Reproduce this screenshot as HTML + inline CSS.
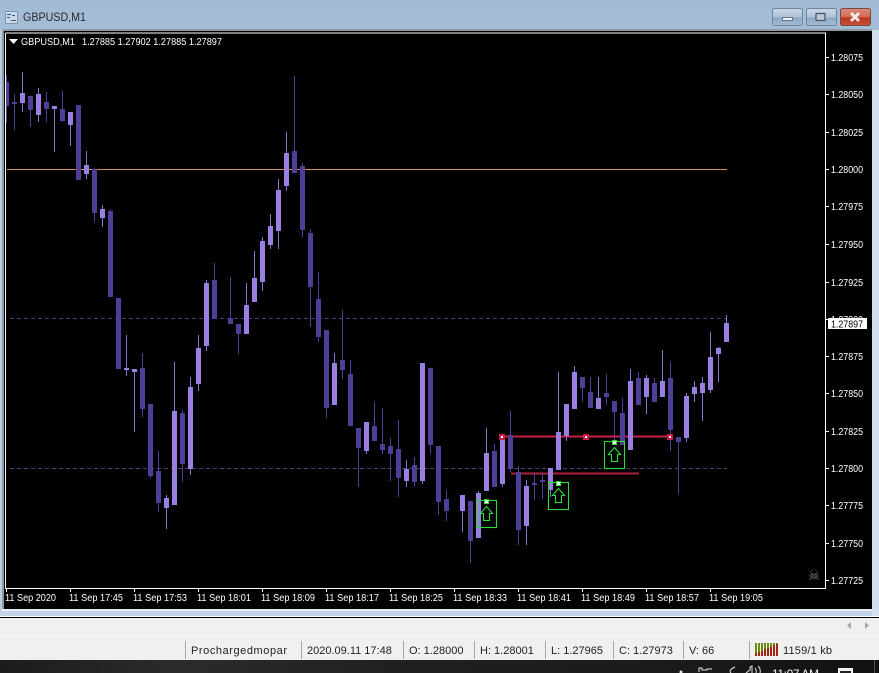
<!DOCTYPE html>
<html><head><meta charset="utf-8"><title>GBPUSD,M1</title>
<style>
html,body{margin:0;padding:0;width:879px;height:673px;overflow:hidden;background:#000}
svg{display:block}
text{font-family:"Liberation Sans",sans-serif}
.w text{font-size:10px;fill:#fff}
.s text{font-size:11px;fill:#222}
</style></head><body>
<svg width="879" height="673" viewBox="0 0 879 673" xmlns="http://www.w3.org/2000/svg">
<defs>
<linearGradient id="tb" x1="0" y1="0" x2="0" y2="1"><stop offset="0" stop-color="#a3bcd6"/><stop offset="1" stop-color="#bccfe1"/></linearGradient>
<linearGradient id="btn" x1="0" y1="0" x2="0" y2="1"><stop offset="0" stop-color="#c6d6e6"/><stop offset=".5" stop-color="#b0c4d8"/><stop offset=".55" stop-color="#8fa9c2"/><stop offset="1" stop-color="#a5bcd2"/></linearGradient>
<linearGradient id="cl" x1="0" y1="0" x2="0" y2="1"><stop offset="0" stop-color="#d98c7c"/><stop offset=".5" stop-color="#cf6a56"/><stop offset=".55" stop-color="#b8361e"/><stop offset="1" stop-color="#c85238"/></linearGradient>
<linearGradient id="tk" x1="0" y1="0" x2="1" y2="0"><stop offset="0" stop-color="#1c1c1c"/><stop offset=".2" stop-color="#2b2b2b"/><stop offset=".45" stop-color="#202020"/><stop offset=".75" stop-color="#1b1b1b"/><stop offset="1" stop-color="#111"/></linearGradient>
<clipPath id="chart"><rect x="6" y="34" width="819" height="554"/></clipPath>
</defs>

<!-- window -->
<rect width="879" height="673" fill="url(#tb)"/>
<rect x="0" y="30" width="879" height="587" fill="#c3d4e8"/>
<rect x="872" y="30" width="7" height="587" fill="#d2e0ee"/>
<rect x="0" y="30" width="3" height="580" fill="#b8cbe0"/>
<rect x="3" y="29" width="869" height="2" fill="#8f9aa6"/>
<rect x="2" y="30" width="2" height="580" fill="#8f9aa6"/>
<rect x="4" y="31" width="868" height="578" fill="#000"/>
<rect x="2" y="609" width="871" height="2" fill="#e4ecf4"/>

<!-- title bar -->
<rect x="5.500" y="11.500" width="12" height="12" fill="#c8d9ea" stroke="#7e98b4"/>
<path d="M7 14.500h4M7 17.500h3M11 20.500h5M12 15.500h3" stroke="#3d5a80" fill="none"/>
<text x="23" y="21" font-size="11.500" fill="#2a2a2a" textLength="63" lengthAdjust="spacingAndGlyphs">GBPUSD,M1</text>
<rect x="772.500" y="8.500" width="30" height="17" rx="2" fill="url(#btn)" stroke="#70869e"/>
<rect x="782.500" y="17.500" width="10" height="3" fill="#eef2f6" stroke="#50606f" stroke-width=".8"/>
<rect x="806.500" y="8.500" width="30" height="17" rx="2" fill="url(#btn)" stroke="#70869e"/>
<rect x="816" y="13.500" width="9" height="7" fill="#b8c8d8" stroke="#44535f" stroke-width="1.200"/>
<rect x="840.500" y="8.500" width="30" height="17" rx="2" fill="url(#cl)" stroke="#7a4a42"/>
<path d="M851 13l8 8M859 13l-8 8" stroke="#f0e8e2" stroke-width="3" fill="none"/>

<!-- chart objects behind candles -->
<g clip-path="url(#chart)" shape-rendering="crispEdges">
<path d="M7 169.500H727" stroke="#d0935f" fill="none"/>
<path d="M10 318.500H727M10 468.500H727" stroke="#4a3f72" stroke-dasharray="4 3" fill="none"/>
<path d="M502 436.500H670" stroke="#c81e48" stroke-width="2" fill="none"/>
<path d="M511 473.500H639" stroke="#b0203f" stroke-width="2" fill="none"/>

<!-- dark wicks -->
<path stroke="#4e3f96" fill="none" d="M6.500 75V123M14.500 94V130M30.500 96V127M46.500 92V122M62.500 91V122M78.500 105V180M94.500 168V222M110.500 209V297M118.500 298V369M142.500 353V417M150.500 404V478M158.500 451V512M182.500 410V482M214.500 263V319M230.500 277V324M238.500 324V354M294.500 76V173M302.500 163V237M310.500 229V327M318.500 272V342M326.500 330V418M342.500 310V379M350.500 360V426M358.500 428V487M374.500 402V441M382.500 408V454M390.500 438V481M398.500 420V497M414.500 457V487M430.500 368V454M438.500 446V515M446.500 490V521M470.500 501V563M494.500 444V487M510.500 411V472M518.500 466V545M534.500 472V500M542.500 474V499M582.500 377V402M590.500 377V408M606.500 374V405M614.500 401V440M622.500 398V445M638.500 372V405M654.500 378V402M670.500 362V451M678.500 437V494"/>
<!-- light wicks -->
<path stroke="#8a6fd0" fill="none" d="M22.500 72V112M38.500 88V122M54.500 106V152M70.500 112V146M86.500 151V179M102.500 205V227M126.500 335V376M134.500 369V432M166.500 495V529M174.500 362V505M190.500 377V475M198.500 335V391M206.500 280V351M246.500 283V334M254.500 251V302M262.500 237V291M270.500 214V249M278.500 179V249M286.500 132V191M334.500 353V405M366.500 422V454M406.500 460V487M422.500 363V484M462.500 495V532M478.500 491V538M486.500 428V491M502.500 437V487M526.500 480V545M550.500 468V497M558.500 372V470M566.500 404V441M574.500 366V409M598.500 377V409M630.500 369V450M646.500 375V414M662.500 350V397M686.500 393V442M694.500 381V402M702.500 377V421M710.500 332V393M718.500 347V382M726.500 315V342"/>
<!-- dark bodies -->
<path stroke="#4e3f96" stroke-width="5" fill="none" d="M14.500 102V104M30.500 96V110M46.500 102V109M62.500 109V121M78.500 105V180M94.500 169V213M110.500 211V297M118.500 298V369M142.500 368V409M150.500 404V476M158.500 471V503M182.500 413V464M214.500 280V319M230.500 318V324M238.500 324V334M294.500 151V173M302.500 166V230M310.500 233V287M318.500 299V337M326.500 330V408M342.500 360V370M350.500 374V426M358.500 428V448M374.500 426V441M382.500 444V450M390.500 446V454M398.500 449V478M414.500 465V482M430.500 368V445M438.500 446V502M446.500 499V511M470.500 501V541M494.500 451V487M510.500 435V469M518.500 472V530M534.500 483V485M542.500 480V482M582.500 377V388M590.500 392V408M606.500 393V397M614.500 401V412M622.500 413V445M638.500 378V405M654.500 383V402M670.500 378V430M678.500 437V442"/>
<path stroke="#4e3f96" stroke-width="3" fill="none" d="M7.500 82V106"/>
<!-- light bodies -->
<path stroke="#9a7ee2" stroke-width="5" fill="none" d="M22.500 93V103M38.500 94V115M54.500 106V109M70.500 112V125M86.500 165V174M102.500 209V218M126.500 368V370M134.500 369V372M166.500 498V508M174.500 411V505M190.500 387V469M198.500 348V384M206.500 283V346M246.500 305V334M254.500 278V302M262.500 241V282M270.500 226V245M278.500 190V231M286.500 153V186M334.500 363V405M366.500 422V451M406.500 469V481M422.500 363V481M462.500 495V511M478.500 493V538M486.500 453V491M502.500 437V484M526.500 486V526M550.500 468V490M558.500 432V470M566.500 404V436M574.500 372V409M598.500 398V409M630.500 381V450M646.500 378V397M662.500 381V397M686.500 396V438M694.500 387V394M702.500 383V393M710.500 357V390M718.500 348V354M726.500 323V342"/>

<!-- red handles -->
<g fill="#c81e48">
<rect x="499" y="434" width="6" height="6"/><rect x="583" y="434" width="6" height="6"/><rect x="667" y="434" width="6" height="6"/>
</g>
<g fill="#fff">
<rect x="501" y="436" width="2" height="2"/><rect x="585" y="436" width="2" height="2"/><rect x="669" y="436" width="2" height="2"/>
</g>
</g>

<!-- green objects -->
<g fill="none" stroke="#2bdc3a" stroke-width="1.100">
<rect x="476.500" y="500.500" width="20" height="27"/>
<path d="M486.500 506.500l6 7h-3v7h-6v-7h-3z"/>
<rect x="548.500" y="482.500" width="20" height="27"/>
<path d="M558.500 488.500l6 7h-3v7h-6v-7h-3z"/>
<rect x="604.500" y="441.500" width="20" height="27"/>
<path d="M614.500 447.500l6 7h-3v7h-6v-7h-3z"/>
</g>
<g shape-rendering="crispEdges">
<rect x="484" y="499" width="5" height="5" fill="#2bdc3a"/><rect x="485" y="500" width="3" height="3" fill="#e8ffe8"/>
<rect x="556" y="481" width="5" height="5" fill="#2bdc3a"/><rect x="557" y="482" width="3" height="3" fill="#e8ffe8"/>
<rect x="612" y="440" width="5" height="5" fill="#2bdc3a"/><rect x="613" y="441" width="3" height="3" fill="#e8ffe8"/>
</g>

<!-- frame -->
<g shape-rendering="crispEdges">
<path d="M5.500 33V588.500H825.500V33H5.500" stroke="#fff" fill="none"/>
<path stroke="#fff" fill="none" d="M826 57.500h3M826 94.500h3M826 132.500h3M826 169.500h3M826 206.500h3M826 244.500h3M826 282.500h3M826 319.500h3M826 356.500h3M826 393.500h3M826 431.500h3M826 468.500h3M826 505.500h3M826 543.500h3M826 580.500h3"/>
<path stroke="#fff" fill="none" d="M6.500 589v3M70.500 589v3M134.500 589v3M198.500 589v3M262.500 589v3M326.500 589v3M390.500 589v3M454.500 589v3M518.500 589v3M582.500 589v3M646.500 589v3M710.500 589v3"/>
</g>
<path d="M9 39h9l-4.500 5z" fill="#fff"/>

<g class="w">
<text x="21" y="45" textLength="54" lengthAdjust="spacingAndGlyphs">GBPUSD,M1</text>
<text x="82" y="45" textLength="140" lengthAdjust="spacingAndGlyphs">1.27885 1.27902 1.27885 1.27897</text>
<text x="831" y="61" textLength="32" lengthAdjust="spacingAndGlyphs">1.28075</text>
<text x="831" y="98" textLength="32" lengthAdjust="spacingAndGlyphs">1.28050</text>
<text x="831" y="136" textLength="32" lengthAdjust="spacingAndGlyphs">1.28025</text>
<text x="831" y="173" textLength="32" lengthAdjust="spacingAndGlyphs">1.28000</text>
<text x="831" y="210" textLength="32" lengthAdjust="spacingAndGlyphs">1.27975</text>
<text x="831" y="248" textLength="32" lengthAdjust="spacingAndGlyphs">1.27950</text>
<text x="831" y="286" textLength="32" lengthAdjust="spacingAndGlyphs">1.27925</text>
<text x="831" y="323" textLength="32" lengthAdjust="spacingAndGlyphs">1.27900</text>
<text x="831" y="360" textLength="32" lengthAdjust="spacingAndGlyphs">1.27875</text>
<text x="831" y="397" textLength="32" lengthAdjust="spacingAndGlyphs">1.27850</text>
<text x="831" y="435" textLength="32" lengthAdjust="spacingAndGlyphs">1.27825</text>
<text x="831" y="472" textLength="32" lengthAdjust="spacingAndGlyphs">1.27800</text>
<text x="831" y="509" textLength="32" lengthAdjust="spacingAndGlyphs">1.27775</text>
<text x="831" y="547" textLength="32" lengthAdjust="spacingAndGlyphs">1.27750</text>
<text x="831" y="584" textLength="32" lengthAdjust="spacingAndGlyphs">1.27725</text>
<text x="5" y="601" textLength="51" lengthAdjust="spacingAndGlyphs">11 Sep 2020</text>
<text x="69" y="601" textLength="54" lengthAdjust="spacingAndGlyphs">11 Sep 17:45</text>
<text x="133" y="601" textLength="54" lengthAdjust="spacingAndGlyphs">11 Sep 17:53</text>
<text x="197" y="601" textLength="54" lengthAdjust="spacingAndGlyphs">11 Sep 18:01</text>
<text x="261" y="601" textLength="54" lengthAdjust="spacingAndGlyphs">11 Sep 18:09</text>
<text x="325" y="601" textLength="54" lengthAdjust="spacingAndGlyphs">11 Sep 18:17</text>
<text x="389" y="601" textLength="54" lengthAdjust="spacingAndGlyphs">11 Sep 18:25</text>
<text x="453" y="601" textLength="54" lengthAdjust="spacingAndGlyphs">11 Sep 18:33</text>
<text x="517" y="601" textLength="54" lengthAdjust="spacingAndGlyphs">11 Sep 18:41</text>
<text x="581" y="601" textLength="54" lengthAdjust="spacingAndGlyphs">11 Sep 18:49</text>
<text x="645" y="601" textLength="54" lengthAdjust="spacingAndGlyphs">11 Sep 18:57</text>
<text x="709" y="601" textLength="54" lengthAdjust="spacingAndGlyphs">11 Sep 19:05</text>
</g>
<rect x="828" y="318" width="39" height="11" fill="#fff"/>
<text x="831" y="327.500" font-size="10" fill="#000" textLength="32" lengthAdjust="spacingAndGlyphs">1.27897</text>
<text x="814" y="580" font-size="14" fill="#7a7a7a" text-anchor="middle" style="font-family:'DejaVu Sans',sans-serif">☠</text>

<!-- bottom bars -->
<rect x="0" y="616" width="879" height="1" fill="#fff"/>
<rect x="0" y="617" width="879" height="1" fill="#000"/>
<rect x="0" y="618" width="879" height="42" fill="#f0f0f0"/>
<rect x="0" y="636" width="879" height="1" fill="#fafafa"/>
<path d="M851 622v7l-4-3.500zM865 622v7l4-3.500z" fill="#a4a8ac"/>
<g shape-rendering="crispEdges" stroke="#a8a8a8" fill="none">
<path d="M185.500 641v18M301.500 641v18M403.500 641v18M474.500 641v18M545.500 641v18M613.500 641v18M683.500 641v18M749.500 641v18"/>
</g>
<g class="s">
<text x="191" y="654" textLength="96">Prochargedmopar</text>
<text x="307" y="654">2020.09.11 17:48</text>
<text x="409" y="654">O: 1.28000</text>
<text x="480" y="654">H: 1.28001</text>
<text x="551" y="654">L: 1.27965</text>
<text x="619" y="654">C: 1.27973</text>
<text x="689" y="654">V: 66</text>
<text x="783" y="654" textLength="49">1159/1 kb</text>
</g>
<g shape-rendering="crispEdges" stroke-width="2" fill="none">
<path stroke="#6c8c12" d="M756 643v10M759 643v9M762 643v8M765 643v6M768 643v5M771 643v4M774 643v2M777 643v1"/>
<path stroke="#a42412" d="M756 653v3M759 652v4M762 651v5M765 649v7M768 648v8M771 647v9M774 645v11M777 644v12"/>
</g>

<!-- taskbar -->
<rect x="0" y="660" width="879" height="13" fill="url(#tk)"/>
<g fill="none" stroke="#e4e4e4">
<circle cx="681" cy="672" r="1" fill="#e4e4e4"/>
<path d="M699 672v-4h3v2h5v-1h5"/>
<path d="M731 673q-3-3 4-6"/>
<path d="M746 673l4-3v-3l2-1v7M755 668q2 2 1 5M758 666q3 3 2 7"/>
</g>
<text x="772" y="678" font-size="12" fill="#f4f4f4" textLength="47">11:07 AM</text>
<rect x="838" y="668" width="15" height="5" fill="#f4f4f4"/>
<rect x="840" y="671" width="11" height="2" fill="#222"/>
<rect x="874" y="660" width="1" height="13" fill="#555"/>
</svg>
</body></html>
